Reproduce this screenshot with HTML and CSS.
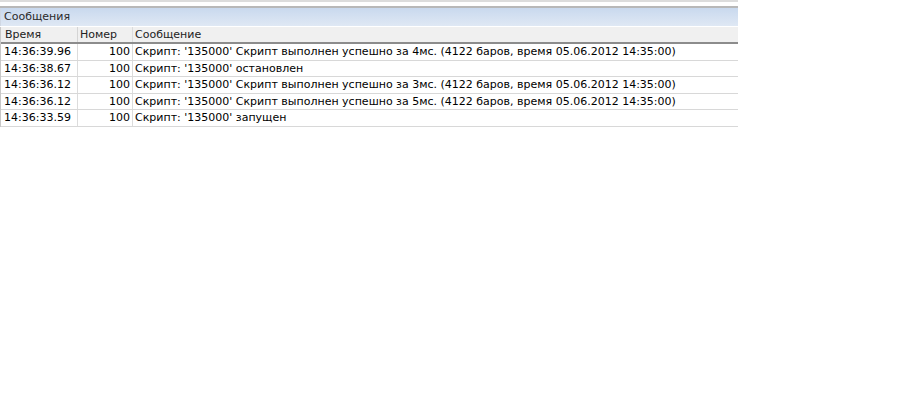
FILE: index.html
```html
<!DOCTYPE html>
<html>
<head>
<meta charset="utf-8">
<link rel="stylesheet" href="styles.css">
</head>
<body>
<div class="panel">
  <div class="topstrip"></div>
  <div class="title">Сообщения</div>
  <div class="grid">
    <div class="row head">
      <div class="c time">Время</div>
      <div class="c num">Номер</div>
      <div class="c msg">Сообщение</div>
    </div>
    <div class="row">
      <div class="c time">14:36:39.96</div>
      <div class="c num">100</div>
      <div class="c msg">Скрипт: '135000' Скрипт выполнен успешно за 4мс. (4122 баров, время 05.06.2012 14:35:00)</div>
    </div>
    <div class="row">
      <div class="c time">14:36:38.67</div>
      <div class="c num">100</div>
      <div class="c msg">Скрипт: '135000' остановлен</div>
    </div>
    <div class="row">
      <div class="c time">14:36:36.12</div>
      <div class="c num">100</div>
      <div class="c msg">Скрипт: '135000' Скрипт выполнен успешно за 3мс. (4122 баров, время 05.06.2012 14:35:00)</div>
    </div>
    <div class="row">
      <div class="c time">14:36:36.12</div>
      <div class="c num">100</div>
      <div class="c msg">Скрипт: '135000' Скрипт выполнен успешно за 5мс. (4122 баров, время 05.06.2012 14:35:00)</div>
    </div>
    <div class="row">
      <div class="c time">14:36:33.59</div>
      <div class="c num">100</div>
      <div class="c msg">Скрипт: '135000' запущен</div>
    </div>
  </div>
</div>
</body>
</html>
```
FILE: styles.css
```css
html, body {
  margin: 0;
  padding: 0;
  background: #ffffff;
}
body {
  font-family: "DejaVu Sans", Verdana, sans-serif;
  font-size: 11px;
  color: #000;
}
.panel {
  width: 738px;
}
.topstrip {
  height: 8px;
  box-sizing: border-box;
  border-top: 2px solid #dcdcdc;
  border-bottom: 2px solid #b8b8b8;
  background: #ffffff;
}
.title {
  height: 18px;
  box-sizing: border-box;
  padding: 2px 0 0 3px;
  line-height: 14px;
  color: #2a2a2a;
  background: linear-gradient(#c9d9ee, #dfe8f4);
  border-left: 1px solid #d0d8e4;
}
.grid {
  border-left: 1px solid #c8c8c8;
  margin-top: 1px;
}
.row {
  display: flex;
  height: 16.5px;
  box-sizing: border-box;
  border-bottom: 1px solid #d8d8d8;
  line-height: 15px;
}
.row.head {
  height: 17px;
  background: #f0f0f0;
  border-bottom: 2px solid #8c8c8c;
  color: #222;
  line-height: 15px;
}
.c {
  white-space: nowrap;
  overflow: hidden;
  box-sizing: border-box;
}
.time {
  width: 77px;
  padding-left: 3px;
  border-right: 1px solid #dcdcdc;
}
.num {
  width: 55px;
  text-align: right;
  padding-right: 2px;
  border-right: 1px solid #dcdcdc;
}
.head .time { padding-left: 4px; border-right-color: #d4d4d4; }
.head .num { text-align: left; padding-left: 2px; }
.msg {
  flex: 1;
  padding-left: 2px;
}
```
